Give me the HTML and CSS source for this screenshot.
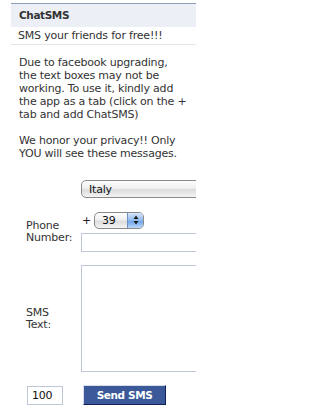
FILE: index.html
```html
<!DOCTYPE html>
<html>
<head>
<meta charset="utf-8">
<link rel="stylesheet" href="styles.css">
</head>
<body>
<div class="app">
  <div class="head">ChatSMS</div>
  <div class="sub">SMS your friends for free!!!</div>
  <p class="msg">Due to facebook upgrading,<br>the text boxes may not be<br>working. To use it, kindly add<br>the app as a tab (click on the +<br>tab and add ChatSMS)</p>
  <p class="msg">We honor your privacy!! Only<br>YOU will see these messages.</p>
  <div class="form">
    <div class="label"></div>
    <div class="field">
      <div class="sel sel-country"><span>Italy</span></div>
    </div>

    <div class="label">Phone<br>Number:</div>
    <div class="field field-phone">
      <div class="code-line">
        <span class="plus">+</span>
        <div class="sel sel-code"><span>39</span><span class="arrows"><svg width="14" height="14" viewBox="0 0 14 14"><path d="M7 2.5 L9.5 6 L4.5 6 Z" fill="#1a1a1a"/><path d="M7 11.5 L9.5 8 L4.5 8 Z" fill="#1a1a1a"/></svg></span></div>
      </div>
      <div class="input input-phone"></div>
    </div>

    <div class="label">SMS<br>Text:</div>
    <div class="field">
      <div class="input textarea"></div>
    </div>

    <div class="label label-count"><div class="input count">100</div></div>
    <div class="field">
      <div class="btn">Send SMS</div>
    </div>
  </div>
</div>
</body>
</html>
```

FILE: styles.css
```css
html, body {
  margin: 0;
  padding: 0;
  background: #fff;
}
body {
  font-family: "DejaVu Sans", "Liberation Sans", sans-serif;
  font-size: 11px;
  letter-spacing: -0.2px;
  color: #333;
}
.app {
  margin: 3px 0 0 11px;
  width: 185px;
  overflow: hidden;
}
.head {
  border-top: 1px solid #8e9cb8;
  background: #eceff5;
  height: 23px;
  line-height: 23px;
  padding: 0 8px;
  font-weight: bold;
  font-size: 10.5px;
  letter-spacing: -0.4px;
  color: #333;
}
.sub {
  height: 17px;
  line-height: 17px;
  padding: 0 7px;
  border-bottom: 1px solid #e3e6ec;
}
.msg {
  margin: 11px 0 13px 0;
  padding: 0 8px;
  line-height: 13px;
  white-space: nowrap;
}
.msg + .msg {
  margin-top: 0;
}
.form {
  margin-top: 20px;
  display: grid;
  grid-template-columns: 70px 160px;
  row-gap: 13px;
  align-items: center;
}
.label {
  padding-left: 15px;
  line-height: 12px;
}
.label-count {
  padding-left: 16px;
}
.sel {
  box-sizing: border-box;
  height: 18px;
  border: 1px solid #8a8a8a;
  border-radius: 5px;
  background: linear-gradient(#fdfdfd, #f0f0f0 45%, #dcdcdc 55%, #f4f4f4);
  display: flex;
  align-items: center;
  padding-left: 7px;
  color: #111;
}
.sel-country {
  width: 160px;
}
.code-line {
  display: flex;
  align-items: center;
  height: 18px;
}
.plus {
  width: 12px;
  padding-left: 1px;
  color: #222;
}
.sel-code {
  width: 50px;
  height: 17px;
  position: relative;
  padding-left: 7px;
  overflow: hidden;
}
.arrows {
  position: absolute;
  right: 0;
  top: 0;
  bottom: 0;
  width: 15px;
  background: linear-gradient(#d6e6fb, #8fb9ee 50%, #6ea4ea 55%, #bcd8fa);
  border-left: 1px solid #6f8fc0;
  display: flex;
  align-items: center;
  justify-content: center;
}
.field-phone {
  display: flex;
  flex-direction: column;
  gap: 4px;
}
.input {
  box-sizing: border-box;
  border: 1px solid #bdc7d8;
  background: #fff;
}
.input-phone {
  width: 160px;
  height: 19px;
}
.textarea {
  width: 160px;
  height: 107px;
}
.count {
  width: 36px;
  height: 19px;
  line-height: 17px;
  padding-left: 4px;
  color: #111;
}
.btn {
  box-sizing: border-box;
  margin-left: 2px;
  width: 83px;
  height: 20px;
  background: #3b5998;
  border: 1px solid;
  border-color: #d9dfea #0e1f5b #0e1f5b #d9dfea;
  color: #fff;
  font-weight: bold;
  font-size: 10.5px;
  letter-spacing: -0.4px;
  text-align: center;
  line-height: 18px;
}
```
